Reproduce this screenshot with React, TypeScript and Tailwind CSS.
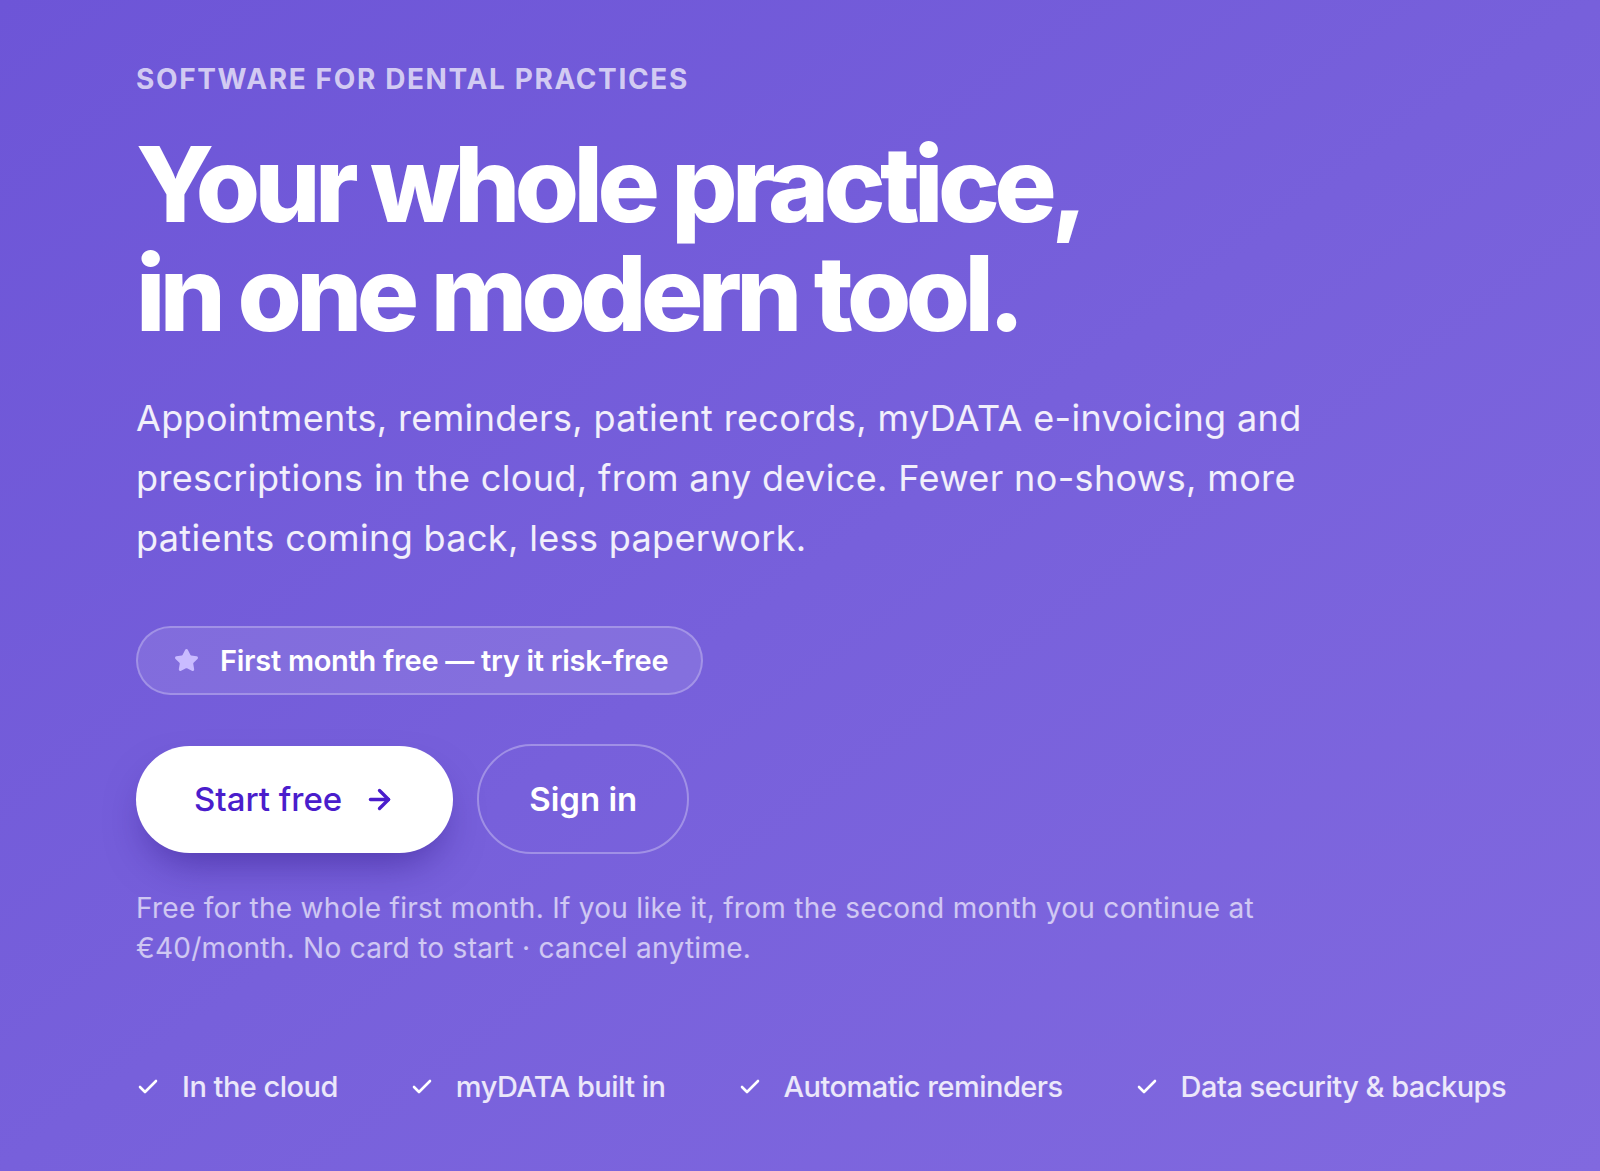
import { ArrowRight, Check, Star } from "lucide-react";

const features = [
  "In the cloud",
  "myDATA built in",
  "Automatic reminders",
  "Data security & backups",
];

function FeatureItem({ label }: { label: string }) {
  return (
    <div className="flex items-center gap-[22px]">
      <Check size={24} strokeWidth={2.6} className="text-white" />
      <span className="text-[29px] leading-[36px] font-medium tracking-[-0.018em] text-white/85">
        {label}
      </span>
    </div>
  );
}

export default function App() {
  return (
    <section
      className="min-h-screen w-full bg-gradient-to-br from-[#6d55d7] via-[#7760db] to-[#8169df] pl-[136px] pt-[62px] pb-16 text-white"
      style={{ fontFamily: "Inter, 'Noto Sans', sans-serif" }}
    >
      <p className="text-[28px] leading-[34px] font-bold tracking-[0.058em] uppercase text-white/70">
        Software for dental practices
      </p>

      <h1 className="mt-[34px] text-[104px] leading-[1.05] font-extrabold tracking-[-0.054em] text-white">
        Your whole practice,
        <br />
        in one modern tool.
      </h1>

      <p className="mt-[40px] max-w-[1200px] text-[36px] leading-[60px] tracking-[0.01em] text-white/90">
        Appointments, reminders, patient records, myDATA e-invoicing and
        prescriptions in the cloud, from any device. Fewer no-shows, more
        patients coming back, less paperwork.
      </p>

      <div className="mt-[58px] inline-flex h-[69px] items-center gap-[21px] rounded-full border-2 border-white/25 bg-white/10 pl-[36px] pr-[33px]">
        <Star size={25} className="fill-[#c9bbff] text-[#c9bbff]" />
        <span className="text-[29px] font-semibold tracking-[-0.01em] text-white">
          First month free — try it risk-free
        </span>
      </div>

      <div className="mt-[49px] flex items-center gap-[24px]">
        <button className="flex h-[107px] items-center gap-[22px] rounded-full bg-white px-[58px] text-[33px] font-medium tracking-[0em] text-[#4a1dcc] shadow-[0_20px_40px_-12px_rgba(45,20,130,0.55)]">
          Start free
          <ArrowRight size={31} strokeWidth={2.6} />
        </button>
        <button className="flex h-[110px] items-center rounded-full border-2 border-white/30 px-[50px] text-[33px] font-semibold tracking-[0em] text-white">
          Sign in
        </button>
      </div>

      <p className="mt-[34px] max-w-[1200px] text-[28px] leading-[40px] tracking-[0.01em] text-white/65">
        Free for the whole first month. If you like it, from the second month
        you continue at €40/month. No card to start · cancel anytime.
      </p>

      <div className="mt-[101px] flex items-center gap-x-[72px]">
        {features.map((f) => (
          <FeatureItem key={f} label={f} />
        ))}
      </div>
    </section>
  );
}
